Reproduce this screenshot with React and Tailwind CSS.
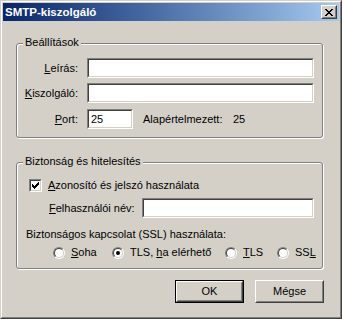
import { Fragment } from 'react'

const CHECK = [[6], [5, 6], [0, 4, 5, 6], [0, 1, 3, 4, 5], [0, 1, 2, 3, 4], [1, 2, 3], [2]]
const CLOSE = [[0, 1, 6, 7], [1, 2, 5, 6], [2, 3, 4, 5], [3, 4], [2, 3, 4, 5], [1, 2, 5, 6], [0, 1, 6, 7]]

function Pixels({ rows, w, h }) {
  return (
    <svg width={w} height={h} viewBox={`0 0 ${w} ${h}`} shapeRendering="crispEdges">
      {rows.map((xs, y) => (
        <Fragment key={y}>
          {xs.map((x) => (
            <rect key={x} x={x} y={y} width="1" height="1" fill="#000" />
          ))}
        </Fragment>
      ))}
    </svg>
  )
}

function TextBox({ width, value }) {
  return (
    <div className={`h-[20px] border border-t-[#808080] border-l-[#808080] border-r-white border-b-white ${width}`}>
      <div className="h-full border border-t-[#404040] border-l-[#404040] border-r-[#d4d0c8] border-b-[#d4d0c8] bg-white px-[2px] leading-[16px]">
        {value}
      </div>
    </div>
  )
}

function Group({ title, height, children, className = '' }) {
  return (
    <div className={`relative ml-[13px] w-[307px] rounded-[3px] border border-[#808080] shadow-[inset_1px_1px_0_#fff,1px_1px_0_#fff] ${height} ${className}`}>
      <span className="absolute -top-[8px] left-[6px] px-[2px] bg-[#d4d0c8] leading-[13px]">{title}</span>
      {children}
    </div>
  )
}

function Radio({ checked, children }) {
  return (
    <div className="flex items-center gap-[6px]">
      <div className="w-[12px] h-[12px] rounded-full border border-t-[#808080] border-l-[#808080] border-r-white border-b-white">
        <div className="w-full h-full rounded-full border border-t-[#404040] border-l-[#404040] border-r-[#d4d0c8] border-b-[#d4d0c8] bg-white flex items-center justify-center">
          {checked && <div className="w-[4px] h-[4px] rounded-full bg-black" />}
        </div>
      </div>
      <span className="leading-[13px]">{children}</span>
    </div>
  )
}

function Button({ children, isDefault }) {
  const inner = (
    <div className="h-full border border-t-white border-l-white border-r-[#404040] border-b-[#404040]">
      <div className="h-full border border-t-[#d4d0c8] border-l-[#d4d0c8] border-r-[#808080] border-b-[#808080] flex items-center justify-center">
        {children}
      </div>
    </div>
  )
  return (
    <div className={`w-[69px] h-[23px] ${isDefault ? 'border border-black' : ''}`}>
      {inner}
    </div>
  )
}

export default function App() {
  return (
    <div className="w-[342px] h-[319px] bg-[#d4d0c8] border border-t-[#d4d0c8] border-l-[#d4d0c8] border-r-[#404040] border-b-[#404040] font-['Liberation_Sans',sans-serif] text-[11px] text-black">
      <div className="h-full border border-t-white border-l-white border-r-[#808080] border-b-[#808080] p-px flex flex-col">

        <div className="h-[18px] bg-gradient-to-r from-[#0a246a] to-[#a6caf0] flex items-center justify-between pl-[2px] pr-[2px]">
          <span className="text-white font-bold text-[11.5px] leading-[14px]">SMTP-kiszolgáló</span>
          <div className="w-[16px] h-[14px] border border-t-white border-l-white border-r-[#404040] border-b-[#404040] bg-[#d4d0c8]">
            <div className="h-full border border-t-[#d4d0c8] border-l-[#d4d0c8] border-r-[#808080] border-b-[#808080] flex items-center justify-center">
              <Pixels rows={CLOSE} w={8} h={7} />
            </div>
          </div>
        </div>

        <Group title="Beállítások" height="h-[95px]" className="mt-[22px]">
          <div className="pt-[14px] flex flex-col">
            <div className="flex items-center h-[20px]">
              <span className="w-[61px] text-right"><u>L</u>eírás:</span>
              <div className="ml-[9px]"><TextBox width="w-[227px]" /></div>
            </div>
            <div className="flex items-center h-[20px] mt-[5px]">
              <span className="w-[61px] text-right"><u>K</u>iszolgáló:</span>
              <div className="ml-[9px]"><TextBox width="w-[227px]" /></div>
            </div>
            <div className="flex items-center h-[20px] mt-[6px]">
              <span className="w-[61px] text-right"><u>P</u>ort:</span>
              <div className="ml-[9px]"><TextBox width="w-[46px]" value="25" /></div>
              <span className="ml-[10px] w-[90px]">Alapértelmezett:</span>
              <span>25</span>
            </div>
          </div>
        </Group>

        <Group title="Biztonság és hitelesítés" height="h-[107px]" className="mt-[24px]">
          <div className="pt-[16px] flex flex-col">
            <div className="flex items-center h-[13px] pl-[12px]">
              <div className="w-[13px] h-[13px] border border-t-[#808080] border-l-[#808080] border-r-white border-b-white">
                <div className="w-full h-full border border-t-[#404040] border-l-[#404040] border-r-[#d4d0c8] border-b-[#d4d0c8] bg-white flex items-center justify-center">
                  <Pixels rows={CHECK} w={7} h={7} />
                </div>
              </div>
              <span className="ml-[6px]"><u>A</u>zonosító és jelszó használata</span>
            </div>
            <div className="flex items-center h-[20px] mt-[6px] pl-[32px]">
              <span className="w-[93px]"><u>F</u>elhasználói név:</span>
              <TextBox width="w-[172px]" />
            </div>
            <div className="mt-[10px] pl-[9px] leading-[13px]">Biztonságos kapcsolat (SSL) használata:</div>
            <div className="mt-[5px] h-[13px] flex items-center pl-[36px]">
              <div className="w-[59px]"><Radio><u>S</u>oha</Radio></div>
              <div className="w-[113px]"><Radio checked>TLS, <u>h</u>a elérhető</Radio></div>
              <div className="w-[52px]"><Radio><u>T</u>LS</Radio></div>
              <Radio>SS<u>L</u></Radio>
            </div>
          </div>
        </Group>

        <div className="mt-[11px] mr-[15px] flex justify-end gap-[11px]">
          <Button isDefault>OK</Button>
          <Button>Mégse</Button>
        </div>
      </div>
    </div>
  )
}
